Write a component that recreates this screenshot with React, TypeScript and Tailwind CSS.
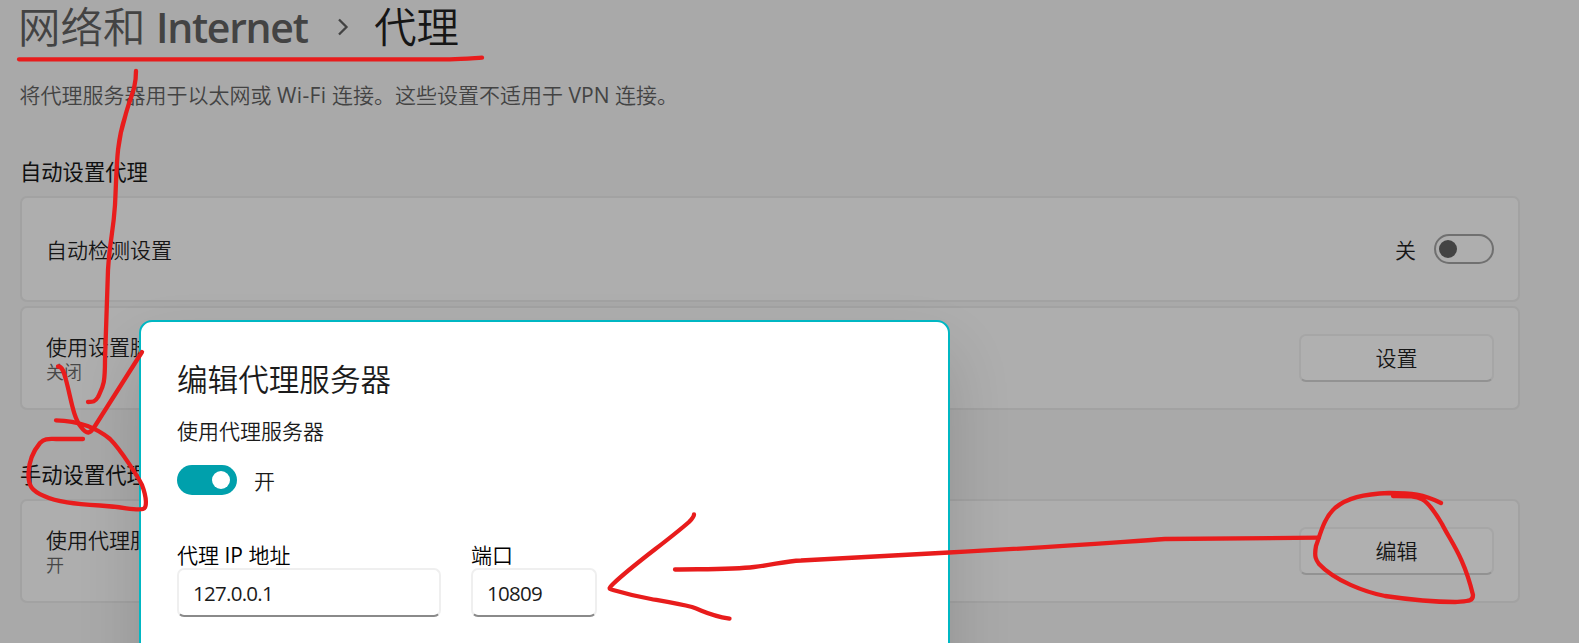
import type { ReactNode } from "react";

function Card({ className, children }: { className: string; children: ReactNode }) {
  return (
    <div
      className={`flex w-[1500px] items-center justify-between rounded-[7px] border-2 border-[#a2a2a2] bg-[#aeaeae] pr-6 pl-6 ${className}`}
    >
      {children}
    </div>
  );
}

function Setting({ title, status }: { title: string; status: string }) {
  return (
    <div className="pt-[2px]">
      <div className="h-[26px] leading-[26px]">{title}</div>
      <div className="h-6 text-[18px] leading-6 text-[#474747]">{status}</div>
    </div>
  );
}

function CardButton({ children }: { children: ReactNode }) {
  return (
    <button className="flex h-12 w-[195px] items-center justify-center rounded-[7px] border-2 border-[#a6a6a6] border-b-[#929292] bg-[#b0b0b0] leading-[26px]">
      {children}
    </button>
  );
}

function Field({ label, value, width }: { label: ReactNode; value: string; width: string }) {
  return (
    <div className={width}>
      <div className="h-[26px] leading-[26px] whitespace-pre text-black">{label}</div>
      <div className="flex h-[49px] items-center rounded-[7px] border-2 border-[#efefef] border-b-[#8a8a8a] bg-white pt-px pl-[14px] text-[20.5px] font-normal tracking-[-0.72px] text-[#1b1b1b]">
        {value}
      </div>
    </div>
  );
}

export default function App() {
  return (
    <div className="relative h-[643px] w-[1579px] overflow-hidden bg-[#a9a9a9] pl-5 font-['Open_Sans','Noto_Sans_CJK_SC',sans-serif] text-[21px] font-[350] text-[#161616]">
      <div className="flex h-[54px] items-center text-[42.5px] leading-[52px] whitespace-pre">
        <span className="-ml-[2px] w-[138px] text-[#434343]">网络和</span>
        <span className="w-[182px] text-[41px] font-semibold tracking-[-1.3px] text-[#434343]">Internet</span>
        <svg width="12" height="18" viewBox="0 0 12 18" className="mr-[24px] -mt-px" fill="none" stroke="#434343" strokeWidth="2.3">
          <path d="M1 1.5 L8.5 9 L1 16.5" />
        </svg>
        <span>代理</span>
      </div>
      <div className="mt-[27px] -ml-[0.5px] h-[28px] leading-7 whitespace-pre text-[#434343]">
        将代理服务器用于以太网或 <span className="font-normal tracking-[0.4px]">Wi-Fi</span> 连接。这些设置不适用于{" "}
        <span className="font-normal">VPN</span> 连接。
      </div>
      <div className="mt-[49px] h-[28px] text-[21.3px] leading-7 font-normal text-[#101010]">自动设置代理</div>
      <Card className="mt-[10px] h-[106px]">
        <span className="pt-[2px] leading-[26px]">自动检测设置</span>
        <div className="flex items-center gap-[18px]">
          <span className="pt-[2px] leading-[26px]">关</span>
          <div className="flex h-[30px] w-[60px] items-center rounded-full border-2 border-[#707070] pl-[3px]">
            <div className="size-[18px] rounded-full bg-[#434343]" />
          </div>
        </div>
      </Card>
      <Card className="mt-1 h-[104px]">
        <Setting title="使用设置脚本" status="关闭" />
        <CardButton>设置</CardButton>
      </Card>
      <div className="mt-[51px] h-[28px] text-[21.3px] leading-7 font-normal text-[#101010]">手动设置代理</div>
      <Card className="mt-[10px] h-[104px]">
        <Setting title="使用代理服务器" status="开" />
        <CardButton>编辑</CardButton>
      </Card>

      <div className="absolute top-[320px] left-[139px] h-[420px] w-[811px] rounded-[13px] border-2 border-[#00b7c3] bg-white pt-[37px] pl-9 text-[#1b1b1b] shadow-[0_32px_64px_rgba(0,0,0,0.14)]">
        <div className="h-10 text-[30.6px] leading-10">编辑代理服务器</div>
        <div className="mt-[19px] h-[26px] leading-[26px]">使用代理服务器</div>
        <div className="mt-[21px] flex h-[30px] items-center gap-[17px]">
          <div className="flex h-[30px] w-[60px] items-center justify-end rounded-full bg-[#00a0ac] pr-[7px]">
            <div className="size-[18px] rounded-full bg-white" />
          </div>
          <span className="pt-[2px] leading-[26px]">开</span>
        </div>
        <div className="mt-[47px] flex gap-[30px]">
          <Field
            label={
              <>
                代理 <span className="font-normal">IP</span> 地址
              </>
            }
            value="127.0.0.1"
            width="w-[264px]"
          />
          <Field label="端口" value="10809" width="w-[126px]" />
        </div>
      </div>

      <svg
        className="pointer-events-none absolute inset-0"
        width="1579"
        height="643"
        viewBox="0 0 1579 643"
        fill="none"
        stroke="#e81c1c"
        strokeWidth="4.3"
        strokeLinecap="round"
        strokeLinejoin="round"
      >
        <path d="M19 59.3 H450 C462 59 470 58.4 482 57.7" />
        <path d="M136 71 C136 90 130 97 125 117 C116 145 117 166 115 205 C113 235 110 238 108 270 L105 360 C105 385 103 386 98 397 C95 402 93 402 88 402" />
        <path d="M58 366.5 C62 366 64 372 66 380 C71 398 73 417 81 427 C87 435 90 434 95 426 L142 352" />
        <path d="M56 420.3 C78 421 96 427 110 439 C121 450 138 477 142 485 C147 498 147 508 143 509 C136 511 125 507 100 505.500 C74 504 57 502 44 496 C32 491 28 486 28.500 473 C29 460 35 449 40 443 C45 438 49 439 56 439 H83" />
        <path d="M675 569.5 C710 569 735 569.5 754 567 C773 565 785 561 801 560.500 L949 552.5 C1040 548 1105 543 1165 539 L1319 537.6" />
        <path d="M694 514.5 C694 517 692 519 689 522 C665 543 635 563 613 584 C609 588 608 589 613 590 C630 595 640 597 651 599 C668 602 680 604 692 607 C704 611 708 615 729.500 618.7" />
        <path d="M1441 503 C1423 494 1412 493 1389 493 C1363 494 1347 498 1335 508 C1324 518 1321 532 1316 546 C1314 557 1316 560 1319 564 C1335 581 1365 592 1385 596 C1412 600 1438 602 1455 602 C1467 601 1473 602 1473 595 C1464 557 1451 542 1442 524 C1425 495 1421 496 1393 496" />
      </svg>
    </div>
  );
}
